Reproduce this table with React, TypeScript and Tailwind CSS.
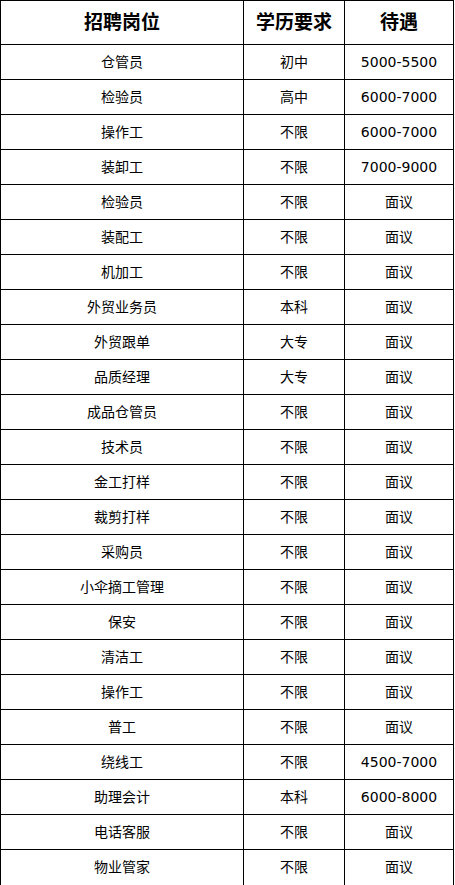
const rows: [string, string, string][] = [
  ["仓管员", "初中", "5000-5500"],
  ["检验员", "高中", "6000-7000"],
  ["操作工", "不限", "6000-7000"],
  ["装卸工", "不限", "7000-9000"],
  ["检验员", "不限", "面议"],
  ["装配工", "不限", "面议"],
  ["机加工", "不限", "面议"],
  ["外贸业务员", "本科", "面议"],
  ["外贸跟单", "大专", "面议"],
  ["品质经理", "大专", "面议"],
  ["成品仓管员", "不限", "面议"],
  ["技术员", "不限", "面议"],
  ["金工打样", "不限", "面议"],
  ["裁剪打样", "不限", "面议"],
  ["采购员", "不限", "面议"],
  ["小伞摘工管理", "不限", "面议"],
  ["保安", "不限", "面议"],
  ["清洁工", "不限", "面议"],
  ["操作工", "不限", "面议"],
  ["普工", "不限", "面议"],
  ["绕线工", "不限", "4500-7000"],
  ["助理会计", "本科", "6000-8000"],
  ["电话客服", "不限", "面议"],
  ["物业管家", "不限", "面议"],
];

export default function App() {
  return (
    <div className="w-[455px] h-[885px] bg-white">
      <div
        className="w-[454px] border border-black text-black"
        style={{ fontFamily: '"DejaVu Sans", "Noto Sans CJK SC", sans-serif' }}
      >
        <div className="flex h-[44px] border-b border-black font-bold text-[19px]">
          <div className="w-[243px] border-r border-black flex items-center justify-center">招聘岗位</div>
          <div className="w-[101px] border-r border-black flex items-center justify-center">学历要求</div>
          <div className="flex-1 flex items-center justify-center">待遇</div>
        </div>
        {rows.map((r, i) => (
          <div
            key={i}
            className={`flex h-[35px] text-[14px] ${i < rows.length - 1 ? "border-b border-black" : ""}`}
          >
            <div className="w-[243px] border-r border-black flex items-center justify-center">{r[0]}</div>
            <div className="w-[101px] border-r border-black flex items-center justify-center">{r[1]}</div>
            <div className="flex-1 flex items-center justify-center">{r[2]}</div>
          </div>
        ))}
      </div>
    </div>
  );
}
